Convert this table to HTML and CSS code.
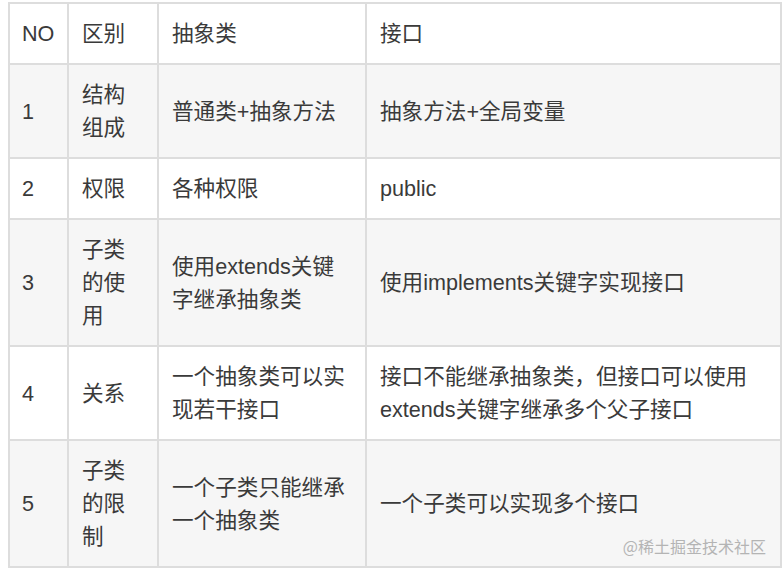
FILE: index.html
```html
<!DOCTYPE html>
<html lang="zh-CN">
<head>
<meta charset="utf-8">
<title>抽象类与接口</title>
<link rel="stylesheet" href="styles.css">
</head>
<body>
<div class="page">
  <table class="cmp">
    <colgroup>
      <col class="c-no">
      <col class="c-kind">
      <col class="c-abs">
      <col class="c-if">
    </colgroup>
    <tr class="white"><td>NO</td><td>区别</td><td>抽象类</td><td>接口</td></tr>
    <tr class="gray"><td>1</td><td>结构组成</td><td>普通类+抽象方法</td><td>抽象方法+全局变量</td></tr>
    <tr class="white"><td>2</td><td>权限</td><td>各种权限</td><td>public</td></tr>
    <tr class="gray"><td>3</td><td>子类的使用</td><td>使用extends关键字继承抽象类</td><td>使用implements关键字实现接口</td></tr>
    <tr class="white"><td>4</td><td>关系</td><td>一个抽象类可以实现若干接口</td><td>接口不能继承抽象类，但接口可以使用extends关键字继承多个父子接口</td></tr>
    <tr class="gray"><td>5</td><td>子类的限制</td><td>一个子类只能继承一个抽象类</td><td>一个子类可以实现多个接口</td></tr>
  </table>
  <div class="mark">@稀土掘金技术社区</div>
</div>
</body>
</html>
```
FILE: styles.css
```css
html, body {
  margin: 0;
  padding: 0;
  background: #ffffff;
}
.page {
  position: relative;
  width: 783px;
  height: 570px;
  padding: 2px 0 0 8px;
  box-sizing: border-box;
  overflow: hidden;
}
.cmp {
  border-collapse: separate;
  border-spacing: 0;
  table-layout: fixed;
  width: 774px;
  border-right: 2px solid #dddddd;
  border-bottom: 2px solid #dddddd;
  font-family: "Liberation Sans", "Noto Sans CJK SC", sans-serif;
  font-size: 21.6px;
  line-height: 33px;
  color: #3a3a3a;
}
.c-no { width: 59px; }
.c-kind { width: 90px; }
.c-abs { width: 208px; }
.c-if { width: 415px; }
.cmp td {
  border-left: 2px solid #dddddd;
  border-top: 2px solid #dddddd;
  padding: 13px 12px 13px 13px;
  vertical-align: middle;
  word-break: normal;
}
.cmp td:first-child {
  padding-left: 12px;
}
.white td { background: #ffffff; }
.gray td { background: #f6f6f6; }
.mark {
  position: absolute;
  right: 17px;
  bottom: 14px;
  font-family: "Noto Sans CJK SC", sans-serif;
  font-size: 16px;
  line-height: 20px;
  color: #b4b4b4;
}
```
